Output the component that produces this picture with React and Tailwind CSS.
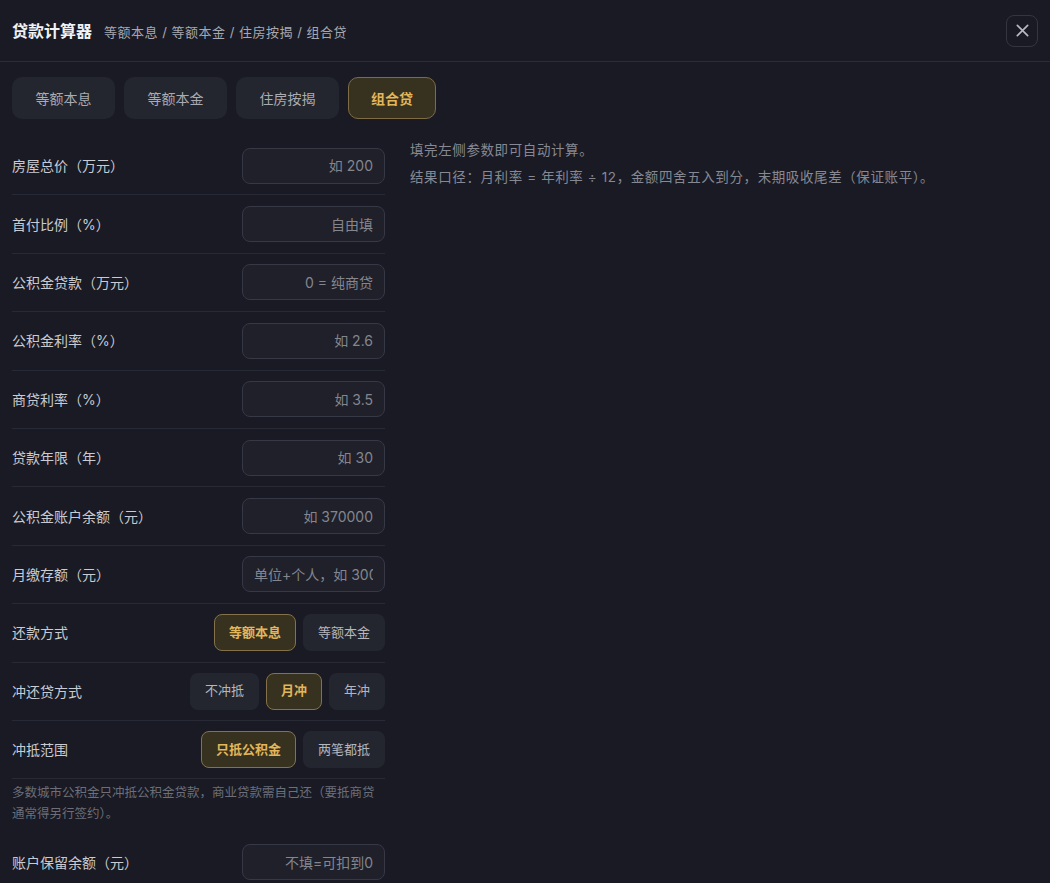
import React, { useState } from 'react';

const tabs = ['等额本息', '等额本金', '住房按揭', '组合贷'];

const fields = [
    { label: '房屋总价（万元）', placeholder: '如 200' },
    { label: '首付比例（%）', placeholder: '自由填' },
    { label: '公积金贷款（万元）', placeholder: '0 = 纯商贷' },
    { label: '公积金利率（%）', placeholder: '如 2.6' },
    { label: '商贷利率（%）', placeholder: '如 3.5' },
    { label: '贷款年限（年）', placeholder: '如 30' },
    { label: '公积金账户余额（元）', placeholder: '如 370000' },
    { label: '月缴存额（元）', placeholder: '单位+个人，如 3000' },
];

const Input = ({ placeholder }) => (
    <input
        type="text"
        placeholder={placeholder}
        className="w-[143px] h-9 rounded-lg border border-[#363845] bg-[#1f2029] px-[11px] text-right text-[14px] text-[#d4d6dc] placeholder:text-[#83868f] focus:outline-none"
    />
);

const Choice = ({ options, value, onChange }) => (
    <div className="flex gap-[7px]">
        {options.map((o) => (
            <button
                key={o}
                onClick={() => onChange(o)}
                className={
                    o === value
                        ? 'h-[37px] px-[14px] rounded-lg border border-[#85724a] bg-[#37311f] text-[13px] font-bold text-[#e2b65a]'
                        : 'h-[37px] px-[14px] rounded-lg border border-transparent bg-[#24262f] text-[13px] text-[#b4b6be]'
                }
            >
                {o}
            </button>
        ))}
    </div>
);

const Row = ({ label, children }) => (
    <div className="h-[58.4px] flex items-center justify-between border-b border-[#272934]">
        <span className="text-[14px] text-[#c9cbd2]">{label}</span>
        {children}
    </div>
);

export default function App() {
    const [tab, setTab] = useState('组合贷');
    const [method, setMethod] = useState('等额本息');
    const [offset, setOffset] = useState('月冲');
    const [scope, setScope] = useState('只抵公积金');

    return (
        <div
            className="min-h-screen bg-[#191a24] text-white"
            style={{ fontFamily: 'Inter, "Noto Sans CJK SC", sans-serif' }}
        >
            {/* Header */}
            <div className="h-[62px] flex items-center justify-between pl-3 pr-3 border-b border-[#2a2c37]">
                <div className="flex items-baseline gap-3">
                    <h1 className="text-[16px] font-bold text-[#f1f2f5]">贷款计算器</h1>
                    <span className="text-[13px] tracking-[0.5px] text-[#a6a8b1]">等额本息 / 等额本金 / 住房按揭 / 组合贷</span>
                </div>
                <button className="w-8 h-8 flex items-center justify-center rounded-lg border border-[#34363f] text-[#b8bac2]">
                    <svg width="15" height="15" viewBox="0 0 16 16" fill="none" stroke="currentColor" strokeWidth="1.8" strokeLinecap="round">
                        <path d="M2.5 2.5l11 11M13.5 2.5l-11 11" />
                    </svg>
                </button>
            </div>

            <div className="px-3 pt-[15px]">
                {/* Tabs */}
                <div className="flex gap-[9px]">
                    {tabs.map((t) => (
                        <button
                            key={t}
                            onClick={() => setTab(t)}
                            className={
                                t === tab
                                    ? 'h-[42px] w-[88px] rounded-[10px] border border-[#7f6c45] bg-[#37311f] text-[14px] font-bold text-[#e2b65a]'
                                    : 'h-[42px] w-[103px] rounded-[10px] bg-[#23252f] text-[14px] text-[#a9abb3]'
                            }
                        >
                            {t}
                        </button>
                    ))}
                </div>

                <div className="flex gap-[25px] mt-[18px]">
                    {/* Left Column: form */}
                    <div className="w-[373px] shrink-0">
                        {fields.map((f) => (
                            <Row key={f.label} label={f.label}>
                                <Input placeholder={f.placeholder} />
                            </Row>
                        ))}
                        <Row label="还款方式">
                            <Choice options={['等额本息', '等额本金']} value={method} onChange={setMethod} />
                        </Row>
                        <Row label="冲还贷方式">
                            <Choice options={['不冲抵', '月冲', '年冲']} value={offset} onChange={setOffset} />
                        </Row>
                        <Row label="冲抵范围">
                            <Choice options={['只抵公积金', '两笔都抵']} value={scope} onChange={setScope} />
                        </Row>
                        <p className="pt-[3px] text-[12.5px] leading-[21px] text-[#6c6f79]">
                            多数城市公积金只冲抵公积金贷款，商业贷款需自己还（要抵商贷通常得另行签约）。
                        </p>
                        <div className="h-[58px] flex items-center justify-between mt-[9px]">
                            <span className="text-[14px] text-[#c9cbd2]">账户保留余额（元）</span>
                            <Input placeholder="不填=可扣到0" />
                        </div>
                    </div>

                    {/* Right Column: result */}
                    <div className="text-[13.5px] leading-[27px] tracking-[0.6px] text-[#868993]">
                        <p>填完左侧参数即可自动计算。</p>
                        <p>结果口径：月利率 = 年利率 ÷ 12，金额四舍五入到分，末期吸收尾差（保证账平）。</p>
                    </div>
                </div>
            </div>
        </div>
    );
}
